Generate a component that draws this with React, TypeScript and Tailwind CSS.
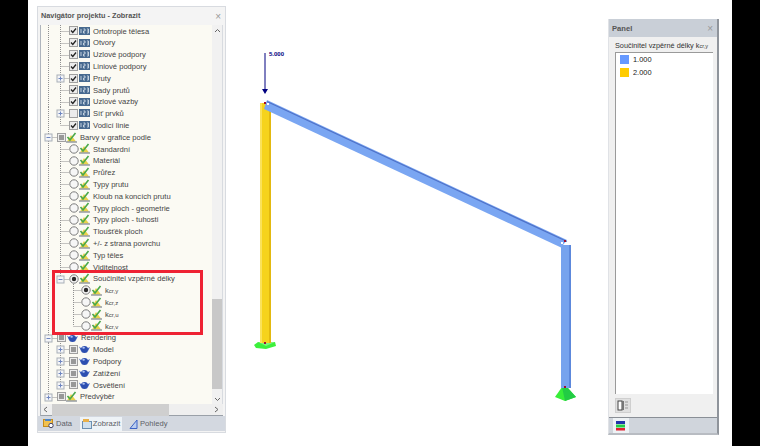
import React from "react";

type Row = {
  level: 1 | 2 | 3;
  kind: "check" | "empty" | "radio" | "radioOn" | "group" | "teaGroup" | "tea";
  text: string;
  sub?: string;
  exp?: "+" | "-";
  last?: boolean;
};

const rows: Row[] = [
  { level: 2, kind: "check", text: "Ortotropie tělesa" },
  { level: 2, kind: "check", text: "Otvory" },
  { level: 2, kind: "check", text: "Uzlové podpory" },
  { level: 2, kind: "check", text: "Liniové podpory" },
  { level: 2, kind: "check", text: "Pruty", exp: "+" },
  { level: 2, kind: "check", text: "Sady prutů" },
  { level: 2, kind: "check", text: "Uzlové vazby" },
  { level: 2, kind: "empty", text: "Síť prvků", exp: "+" },
  { level: 2, kind: "check", text: "Vodicí linie", last: true },
  { level: 1, kind: "group", text: "Barvy v grafice podle", exp: "-" },
  { level: 2, kind: "radio", text: "Standardní" },
  { level: 2, kind: "radio", text: "Materiál" },
  { level: 2, kind: "radio", text: "Průřez" },
  { level: 2, kind: "radio", text: "Typy prutu" },
  { level: 2, kind: "radio", text: "Kloub na koncích prutu" },
  { level: 2, kind: "radio", text: "Typy ploch - geometrie" },
  { level: 2, kind: "radio", text: "Typy ploch - tuhosti" },
  { level: 2, kind: "radio", text: "Tloušťěk ploch" },
  { level: 2, kind: "radio", text: "+/- z strana povrchu" },
  { level: 2, kind: "radio", text: "Typ těles" },
  { level: 2, kind: "radio", text: "Viditelnost" },
  { level: 2, kind: "radioOn", text: "Součinitel vzpěrné délky", exp: "-", last: true },
  { level: 3, kind: "radioOn", text: "k", sub: "cr,y" },
  { level: 3, kind: "radio", text: "k", sub: "cr,z" },
  { level: 3, kind: "radio", text: "k", sub: "cr,u" },
  { level: 3, kind: "radio", text: "k", sub: "cr,v", last: true },
  { level: 1, kind: "teaGroup", text: "Rendering", exp: "-" },
  { level: 2, kind: "tea", text: "Model", exp: "+" },
  { level: 2, kind: "tea", text: "Podpory", exp: "+" },
  { level: 2, kind: "tea", text: "Zatížení", exp: "+" },
  { level: 2, kind: "tea", text: "Osvětlení", exp: "+", last: true },
  { level: 1, kind: "group", text: "Předvýběr", exp: "+", last: true },
];

const gutterWidth = { 1: 16, 2: 28, 3: 40 };

const Gutter = ({ row }: { row: Row }) => {
  const w = gutterWidth[row.level];
  const rootEnd = row.level === 1 && row.last ? 6 : 12;
  const branchX = row.level === 1 ? 7.5 : row.level === 2 ? 19.5 : 32.5;
  return (
    <svg width={w} height={12} className="shrink-0">
      <g stroke="#8f8f8f" strokeDasharray="1 1" fill="none">
        <path d={`M7.5 0V${rootEnd}`} />
        {row.level > 1 && <path d={`M${branchX} 0V${row.last ? 6 : 12}`} />}
        <path d={`M${branchX} 6.5H${w}`} />
      </g>
      {row.exp && (
        <g>
          <rect x={branchX - 3.5} y={3} width={7} height={7} fill="#f4f5f7" stroke="#a9afb8" />
          <path d={`M${branchX - 2} 6.5H${branchX + 2}`} stroke="#6f86c0" />
          {row.exp === "+" && <path d={`M${branchX} 4.5V8.5`} stroke="#6f86c0" />}
        </g>
      )}
    </svg>
  );
};

const CheckBox = ({ on }: { on: boolean }) => (
  <svg width={9} height={9} className="shrink-0">
    <rect x={0.5} y={0.5} width={8} height={8} fill="#ececec" stroke="#a0a0a0" />
    {on && <path d="M2 4.5L3.8 6.5L7 2.5" fill="none" stroke="#222" strokeWidth={1.3} />}
  </svg>
);

const NumIcon = () => (
  <svg width={11} height={8} className="ml-[1px] shrink-0">
    <rect width={11} height={8} fill="#47698f" />
    <path d="M2 2V6M4.5 2H6V4H4.5V6H6M8 2H9.5V6H8M8 4H9.5" stroke="#cfdbe6" strokeWidth={0.9} fill="none" />
  </svg>
);

const Radio = ({ on }: { on: boolean }) => (
  <svg width={10} height={10} className="shrink-0">
    <circle cx={5} cy={5} r={4.2} fill="#f6f6f6" stroke="#7d7d7d" />
    {on && <circle cx={5} cy={5} r={2.2} fill="#2a2a2a" />}
  </svg>
);

const ColorCheck = () => (
  <svg width={11} height={11} className="shrink-0">
    <path d="M1 9.5L5 3L10 9.5Z" fill="#e9d24a" />
    <path d="M1.5 5L4 8L9.5 1" fill="none" stroke="#4aa84a" strokeWidth={1.6} />
    <path d="M0 10H11" stroke="#7c8490" strokeWidth={1.2} />
  </svg>
);

const GroupBox = () => (
  <svg width={9} height={9} className="shrink-0">
    <rect x={0.5} y={0.5} width={8} height={8} fill="#ececec" stroke="#a0a0a0" />
    <rect x={2} y={2} width={5} height={5} fill="#989898" />
  </svg>
);

const Teapot = () => (
  <svg width={11} height={10} className="ml-[1px] shrink-0">
    <ellipse cx={5.5} cy={5.5} rx={3.6} ry={3.6} fill="#2d4fb0" />
    <path d="M2 4L0 2.5L2 7ZM9 4L11 3L9 7Z" fill="#3d62c4" />
    <ellipse cx={4.6} cy={3.8} rx={1.3} ry={1} fill="#a8bdf0" />
  </svg>
);

const RowIcons = ({ kind }: { kind: Row["kind"] }) => {
  if (kind === "check" || kind === "empty")
    return (
      <>
        <CheckBox on={kind === "check"} />
        <NumIcon />
      </>
    );
  if (kind === "radio" || kind === "radioOn")
    return (
      <>
        <Radio on={kind === "radioOn"} />
        <ColorCheck />
      </>
    );
  if (kind === "group")
    return (
      <>
        <GroupBox />
        <ColorCheck />
      </>
    );
  return (
    <>
      <GroupBox />
      <Teapot />
    </>
  );
};

const TreeRow = ({ row }: { row: Row }) => (
  <div className="flex h-[11.8px] items-center">
    <Gutter row={row} />
    <RowIcons kind={row.kind} />
    <span className="ml-[3px] mt-[1px] whitespace-nowrap text-[7.6px] leading-none text-[#444]">
      {row.text}
      {row.sub && <span className="text-[6px]">{row.sub}</span>}
    </span>
  </div>
);

const Structure = () => (
  <svg width={382} height={446} viewBox="226 0 382 446" className="shrink-0">
    {/* load */}
    <path d="M265 53V90" stroke="#000080" strokeWidth={1} />
    <path d="M262 89H268L265 94Z" fill="#000080" />
    <text x={269} y={55.5} fontSize={6} fontWeight={700} fill="#000080" fontFamily="'Liberation Sans', sans-serif">
      5.000
    </text>
    {/* supports */}
    <path d="M254 345L258 342H275L276 346L266 349L256 348Z" fill="#3cf03c" />
    <path d="M258 342H275L266 346Z" fill="#7df57d" />
    <path d="M555 397L562 387H567L576 397L565 401Z" fill="#38ee38" />
    <path d="M562 387L565 401L576 397L567 387Z" fill="#22cc44" />
    {/* columns */}
    <rect x={260} y={103} width={11} height={240} fill="#f6d31c" />
    <rect x={260} y={103} width={2} height={240} fill="#fbe25a" />
    <rect x={269} y={103} width={2} height={240} fill="#e3b90f" />
    <rect x={561} y={245} width={10} height={143} fill="#76a3ee" />
    <rect x={569} y={245} width={2} height={143} fill="#5c88dc" />
    {/* beam */}
    <path d="M267 100L567 240L561 247.5L264 109Z" fill="#7aa6f2" />
    <path d="M267 101.5L567 241.5" stroke="#4f72c8" strokeWidth={1.3} fill="none" />
    {/* nodes */}
    <rect x={264} y={102} width={2} height={2} fill="#a01030" />
    <rect x={267} y={103} width={2} height={2} fill="#ffffff" />
    <rect x={564} y={240} width={2} height={2} fill="#a01030" />
    <rect x={561} y={242} width={2} height={2} fill="#ffffff" />
    <rect x={264} y={342} width={2} height={2} fill="#a01030" />
    <rect x={564} y={386} width={2} height={2} fill="#a01030" />
  </svg>
);

const App = () => {
  return (
    <div className="flex h-[446px] w-[760px] overflow-hidden bg-white font-['Liberation_Sans',sans-serif]">
      <div className="w-[28px] shrink-0 bg-black" />
      <div className="flex w-[704px] pl-[9px]">
        {/* Navigator */}
        <div className="mt-[6px] flex h-[427px] w-[189px] shrink-0 flex-col border border-[#d8dbe0] bg-[#f4f4f4]">
          <div className="flex h-[18px] items-center justify-between px-[3px] pt-[1px]">
            <span className="text-[7.3px] font-bold text-[#555]">Navigátor projektu - Zobrazit</span>
            <span className="mr-[1px] text-[10px] leading-none text-[#999]">×</span>
          </div>
          <div className="mx-[2px] flex h-[379px] border-l border-[#aeb4bc] border-r border-r-[#d8dbe0]">
            <div className="relative w-[171px] overflow-hidden bg-[#fbfaf3]">
              {rows.map((row) => (
                <TreeRow key={row.text + (row.sub ?? "")} row={row} />
              ))}
              <div className="absolute left-[11px] top-[245px] h-[65px] w-[151px] border-[3px] border-[#ee2233]" />
            </div>
            <div className="flex w-[10px] flex-col items-center justify-between bg-[#f1f1f1] pb-[2px] pt-[3px]">
              <svg width={7} height={5}>
                <path d="M1 4L3.5 1.5L6 4" fill="none" stroke="#666" />
              </svg>
              <div className="mt-[258px] h-[90px] w-[10px] bg-[#c8c8c8]" />
              <svg width={7} height={5}>
                <path d="M1 1L3.5 3.5L6 1" fill="none" stroke="#666" />
              </svg>
            </div>
          </div>
          <div className="mx-[2px] flex h-[12px] items-center border-b border-[#9aa0a8] border-l border-l-[#aeb4bc] bg-[#efefef]">
            <svg width={11} height={7} className="shrink-0">
              <path d="M6 1L3 3.5L6 6" fill="none" stroke="#666" />
            </svg>
            <div className="h-[12px] w-[117px] bg-[#cfcfcf]" />
            <svg width={7} height={7} className="ml-[44px] shrink-0">
              <path d="M2 1L5 3.5L2 6" fill="none" stroke="#666" />
            </svg>
          </div>
          <div className="flex h-[15px] items-center bg-[#d3d8e0] pl-[5px] text-[7.6px] text-[#5c6066]">
            <svg width={12} height={11} className="shrink-0">
              <rect x={0.5} y={1.5} width={9} height={7} fill="#f2c14e" stroke="#c58c1c" />
              <rect x={2} y={1} width={6} height={2} fill="#4f86c6" />
              <circle cx={8} cy={7.5} r={2.2} fill="#fff" stroke="#446" />
            </svg>
            <span className="ml-[1px]">Data</span>
            <div className="ml-[8px] flex h-[14px] w-[42px] items-center justify-center bg-[#eef3f7]">
              <svg width={10} height={10} className="shrink-0">
                <rect x={0.5} y={2.5} width={9} height={7} fill="#cfe0ee" stroke="#6b8fb0" />
                <rect x={1} y={0} width={6} height={3} fill="#e8b04a" />
              </svg>
              <span className="ml-[1px]">Zobrazit</span>
            </div>
            <svg width={10} height={10} className="ml-[7px] shrink-0">
              <path d="M1 9.5L8 1V9.5Z" fill="#b9cdf0" stroke="#3d62c4" />
            </svg>
            <span className="ml-[1px]">Pohledy</span>
          </div>
        </div>

        <Structure />

        {/* Panel */}
        <div className="mt-[19px] flex h-[416px] w-[111px] shrink-0 flex-col border-b-2 border-r-2 border-b-[#b8bcc2] border-r-[#8f949b] border-l border-l-[#e0e2e6] bg-[#f0f0f0]">
          <div className="flex h-[18px] shrink-0 items-center justify-between bg-[#c9cfd7] px-[3px] pt-[1px]">
            <span className="text-[7.6px] font-bold text-[#555]">Panel</span>
            <span className="mr-[1px] text-[10px] leading-none text-[#999]">×</span>
          </div>
          <div className="flex min-h-0 flex-1 flex-col pl-[6px] pr-[4px]">
            <div className="h-[15px] whitespace-nowrap pt-[5px] text-[7.3px] leading-none text-[#333]">
              Součinitel vzpěrné délky k<span className="text-[5.5px]">cr,y</span>
            </div>
            <div className="flex h-[342px] flex-col gap-[4px] border-l border-t border-[#9a9a9a] bg-white pl-[4px] pt-[2px]">
              <div className="flex items-center gap-[4px]">
                <div className="h-[9px] w-[9px] bg-[#6699ff]" />
                <span className="text-[7.4px] leading-none text-[#222]">1.000</span>
              </div>
              <div className="flex items-center gap-[4px]">
                <div className="h-[9px] w-[9px] bg-[#ffcc00]" />
                <span className="text-[7.4px] leading-none text-[#222]">2.000</span>
              </div>
            </div>
            <div className="mt-[4px] flex h-[15px] w-[16px] items-center justify-center border border-[#cfcfcf] bg-[#e0e0e0]">
              <svg width={12} height={11}>
                <rect x={1} y={1} width={4} height={9} fill="#fff" stroke="#444" />
                <rect x={5} y={1} width={2} height={9} fill="#777" />
                <path d="M8 2H11M8 5H11M8 8H11" stroke="#999" />
              </svg>
            </div>
          </div>
          <div className="flex h-[16px] shrink-0 items-center border-t border-[#8a8f96] bg-[#d0d5dc] pl-[4px]">
            <div className="flex h-[15px] w-[16px] items-center justify-center bg-[#eef2f5]">
              <svg width={10} height={10}>
                <rect y={0} width={9} height={3} fill="#2233aa" />
                <rect y={3.5} width={9} height={3} fill="#22cc44" />
                <rect y={7} width={9} height={2.5} fill="#e02030" />
              </svg>
            </div>
          </div>
        </div>
      </div>
      <div className="w-[28px] shrink-0 bg-black" />
    </div>
  );
};

export default App;
